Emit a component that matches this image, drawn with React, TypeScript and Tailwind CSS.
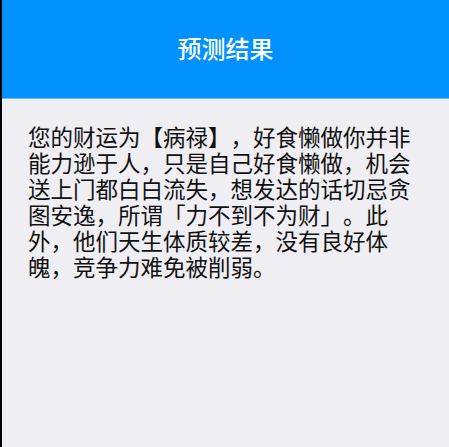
import React from "react";

const result =
  "您的财运为【病禄】，好食懒做你并非能力逊于人，只是自己好食懒做，机会送上门都白白流失，想发达的话切忌贪图安逸，所谓「力不到不为财」。此外，他们天生体质较差，没有良好体魄，竞争力难免被削弱。";

export default function App() {
  return (
    <div
      lang="zh-CN"
      className="flex h-screen flex-col border-l-2 border-black bg-[#efeef3] font-['Noto_Sans_CJK_SC',sans-serif] [text-spacing-trim:space-all]"
    >
      <header className="flex h-[99px] shrink-0 items-center justify-center border-b border-[#6cbaf6] bg-[#0091ff]">
        <h1 className="mb-[2px] text-[24px] font-medium text-white">预测结果</h1>
      </header>
      <section className="px-[26px] pt-[24px]">
        <p className="text-[22.5px] leading-[26px] text-[#111]">{result}</p>
      </section>
    </div>
  );
}
